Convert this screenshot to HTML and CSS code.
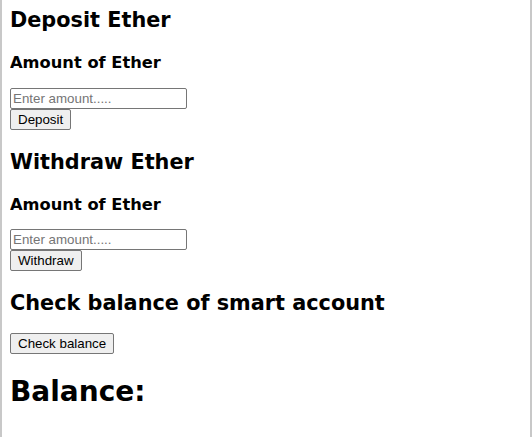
FILE: index.html
```html
<!DOCTYPE html>
<html>
<head>
<meta charset="utf-8">
<title>Smart Account</title>
<link rel="stylesheet" href="styles.css">
</head>
<body>
<section class="section">
  <h2 class="title first">Deposit Ether</h2>
  <h3 class="label">Amount of Ether</h3>
  <input class="field" type="text" placeholder="Enter amount.....">
  <button class="btn">Deposit</button>
</section>
<section class="section">
  <h2 class="title">Withdraw Ether</h2>
  <h3 class="label">Amount of Ether</h3>
  <input class="field" type="text" placeholder="Enter amount.....">
  <button class="btn">Withdraw</button>
</section>
<section class="section">
  <h2 class="title">Check balance of smart account</h2>
  <button class="btn btn-check">Check balance</button>
</section>
<h1 class="balance">Balance:</h1>
</body>
</html>
```

FILE: styles.css
```css
html {
  border-left: 2px solid #c8c8c8;
  border-right: 2px solid #c8c8c8;
  min-height: 100%;
  box-sizing: border-box;
}
body {
  margin: 8px;
  font-family: "DejaVu Sans", Verdana, sans-serif;
  font-size: 14px;
  color: #000;
}
.section {
  display: flex;
  flex-direction: column;
  align-items: flex-start;
}
.title {
  font-size: 20.8px;
  font-weight: bold;
  margin: 20px 0 21px;
  line-height: normal;
}
.title.first {
  margin-top: 0;
}
.label {
  font-size: 16.3px;
  font-weight: bold;
  margin: 0 0 15.5px;
  line-height: normal;
}
.field {
  box-sizing: border-box;
  width: 177px;
  height: 21px;
  margin: 0;
  padding: 1px 2px;
  border: 1px solid #767676;
  border-radius: 2px;
  font-family: "Liberation Sans", Arial, sans-serif;
  font-size: 13.33px;
  background: #fff;
}
.field::placeholder {
  color: #757575;
}
.btn {
  box-sizing: border-box;
  height: 21px;
  margin: 0;
  padding: 1px 7px;
  border: 1px solid #767676;
  border-radius: 2px;
  background: #efefef;
  font-family: "Liberation Sans", Arial, sans-serif;
  font-size: 13.33px;
  color: #000;
}
.btn-check {
  margin-top: -3px;
}
.balance {
  font-size: 28px;
  font-weight: bold;
  margin: 21px 0;
  line-height: normal;
}
```
